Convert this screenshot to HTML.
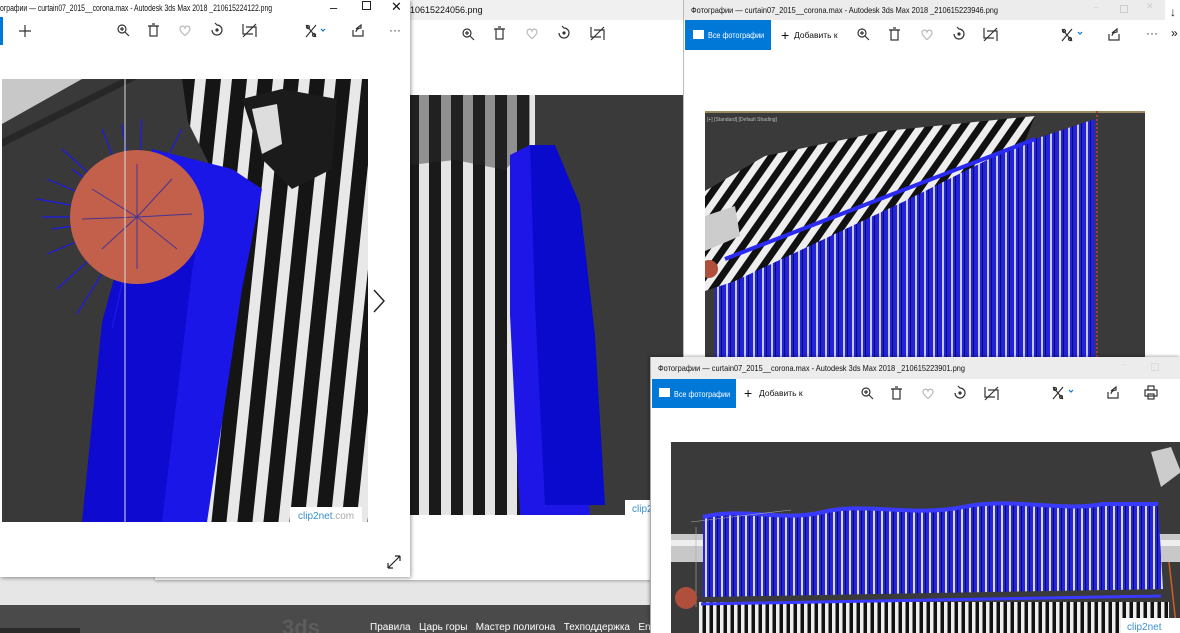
<!DOCTYPE html>
<html><head><meta charset="utf-8">
<style>
*{margin:0;padding:0;box-sizing:border-box}
html,body{width:1180px;height:633px;overflow:hidden}
body{position:relative;background:#e6e6e6;font-family:"Liberation Sans","Noto Sans CJK SC",sans-serif;color:#111}
.abs{position:absolute}
.win{position:absolute;background:#fff;overflow:hidden}
.tb{position:absolute;left:0;right:0;top:0;background:#f0f0f0;font-size:9px;white-space:nowrap}
.tb span.t{transform-origin:0 0}
.blue{position:absolute;background:#0078d7;color:#fff;font-size:8.5px;white-space:nowrap}
.small{font-size:9px;white-space:nowrap;position:absolute}
svg{display:block}
</style></head><body>

<!-- bottom site strip -->
<div class="abs" style="left:0;top:605px;width:1180px;height:28px;background:#4a4a4a"></div>
<div class="abs" style="left:0;top:628px;width:80px;height:5px;background:#2a2a2a"></div>
<div class="abs" style="left:282px;top:615px;font-size:22px;color:#5c5c5c;font-weight:bold">3ds</div>
<div class="small" style="left:370px;top:622px;color:#fff;font-size:10px">Правила&nbsp;&nbsp; Царь горы&nbsp;&nbsp; Мастер полигона&nbsp;&nbsp; Техподдержка&nbsp;&nbsp; Eng</div>

<!-- Window 2 (middle) -->
<div class="win" style="left:155px;top:0;width:528px;height:580px;box-shadow:0 1px 3px rgba(0,0,0,.3)">
  <div class="tb" style="height:20px"><span style="position:absolute;left:255px;top:5px">10615224056.png</span></div>
  <svg class="abs" style="left:0;top:20px" width="528" height="30">
    <g fill="none" stroke="#333" stroke-width="1.2">
      <circle cx="312" cy="13" r="4"/><path d="M315 16l4 4M310 13h4M312 11v4"/>
      <rect x="341" y="9" width="7" height="10"/><path d="M339 9h11M343 7h3"/>
      <path d="M372 12c0-3 4-4 5-1c1-3 5-2 5 1c0 3-5 6-5 7c0-1-5-4-5-7z" stroke="#bbb"/>
      <path d="M404 13a5 5 0 1 0 5-5l-2-2" /><circle cx="409" cy="13" r="1" fill="#333"/>
      <path d="M436 7v10h10M439 10h10v10M436 20l13-13"/>
    </g>
  </svg>
  <svg class="abs" style="left:255px;top:95px" width="273" height="420">
    <defs><pattern id="st2" width="22" height="420" patternUnits="userSpaceOnUse"><rect width="22" height="420" fill="#1a1a1a"/><rect x="9" width="10" height="420" fill="#e4e4e4"/></pattern></defs>
    <rect width="273" height="420" fill="#3a3a3a"/>
    <rect x="0" y="0" width="125" height="420" fill="url(#st2)"/>
    <path d="M0 0h120v50l-25 25l-50-10l-45 5z" fill="#2a2a2a" opacity=".45"/>
    <path d="M100 60l20 -10l10 0l15 20l15 120l20 230l-70 0l-10-200z" fill="#1e16e6"/>
    <path d="M120 50l25 0l25 60l15 130l10 170l-60 0l-10-200z" fill="#0a0acc"/>
    <rect x="215" y="405" width="58" height="15" fill="#fff"/>
    <text x="222" y="417" font-size="10" fill="#3a8fd0" font-family="Liberation Sans">clip2net</text>
  </svg>
</div>

<!-- Window 1 (left) -->
<div class="win" style="left:0;top:0;width:410px;height:577px;box-shadow:1px 1px 4px rgba(0,0,0,.4)">
  <div class="tb" style="height:17px;background:#fff"><span class="t" style="position:absolute;left:0;top:3px;transform:scaleX(.76)">ографии — curtain07_2015__corona.max - Autodesk 3ds Max 2018 _210615224122.png</span>
    <span style="position:absolute;left:330px;top:0;font-size:13px">–</span>
    <span style="position:absolute;left:362px;top:1px;width:9px;height:9px;border:1px solid #222"></span>
    <span style="position:absolute;left:391px;top:-1px;font-size:13px">✕</span>
  </div>
  <div class="abs" style="left:0;top:17px;width:3px;height:28px;background:#0078d7"></div>
  <svg class="abs" style="left:0;top:17px" width="410" height="28">
    <g fill="none" stroke="#333" stroke-width="1.2">
      <path d="M25 8v12M19 14h12"/>
      <circle cx="122" cy="12" r="4"/><path d="M125 15l4 4M120 12h4M122 10v4"/>
      <rect x="150" y="9" width="7" height="10"/><path d="M148 9h11M152 7h3"/>
      <path d="M180 12c0-3 4-4 5-1c1-3 5-2 5 1c0 3-5 6-5 7c0-1-5-4-5-7z" stroke="#bbb"/>
      <path d="M212 13a5 5 0 1 0 5-5l-2-2"/><circle cx="217" cy="13" r="1" fill="#333"/>
      <path d="M243 7v10h10M246 10h10v10M243 20l13-13"/>
      <path d="M306 8l10 12M306 20l10-12" /><circle cx="308" cy="10" r="1.5"/><circle cx="314" cy="18" r="1.5"/>
      <path d="M321 12l2 2l2-2" stroke="#0078d7"/>
      <path d="M353 13v6h10v-6M356 12l5-4v3c-3 0-5 2-5 4"/>
    </g>
    <text x="389" y="17" font-size="12" fill="#333">···</text>
  </svg>
  <svg class="abs" style="left:2px;top:79px" width="366" height="443">
    <defs>
      <pattern id="st1" width="26" height="443" patternUnits="userSpaceOnUse" patternTransform="skewX(-6)"><rect width="26" height="443" fill="#151515"/><rect x="11" width="11" height="443" fill="#e8e8e8"/></pattern>
    </defs>
    <rect width="366" height="443" fill="#393939"/>
    <path d="M0 0h80l-80 45z" fill="#c8c8c8"/>
    <path d="M0 60l120-60h15l-135 68z" fill="#151515" opacity=".5"/>
    <path d="M180 0h186v443h-200l20-150l30-190l-30-60z" fill="url(#st1)"/>
    <path d="M240 20l40-10l55 10l-5 70l-40 20l-30-30z" fill="#1b1b1b"/>
    <path d="M250 30l25 -5l5 40l-20 10z" fill="#ddd"/>
    <path d="M150 70l40 10l40 10l30 20l-20 100l-35 233h-100l20-200l10-80z" fill="#1a16e8"/>
    <path d="M80 443l20-200l25-90l35-30l40 10l-10 60l-30 250z" fill="#0e0ad0"/>
    <g stroke="#1e1ae8" stroke-width="1.2">
      <path d="M135 138L40 138M135 138L45 100M135 138L60 70M135 138L100 50M135 138L140 40M135 138L180 50M135 138L45 175M135 138L55 210M135 138L75 235M135 138L110 250M135 138L50 150M135 138L35 120M135 138L70 90M135 138L120 45"/>
    </g>
    <circle cx="135" cy="138" r="67" fill="#c2604c"/>
    <g stroke="#2a2aa0" stroke-width="1" opacity=".8">
      <path d="M135 138L90 110M135 138L170 100M135 138L100 170M135 138L175 170M135 138L135 85M135 138L135 190M135 138L80 140M135 138L190 135"/>
    </g>
    <path d="M123 0v443" stroke="#ddd" stroke-width="1"/>
    <rect x="288" y="428" width="72" height="15" fill="#fff"/>
    <text x="296" y="440" font-size="10" fill="#3a8fd0" font-family="Liberation Sans">clip2net<tspan fill="#aaa">.com</tspan></text>
  </svg>
  <svg class="abs" style="left:370px;top:288px" width="20" height="26"><path d="M4 2l10 11l-10 11" fill="none" stroke="#222" stroke-width="1.4"/></svg>
  <svg class="abs" style="left:386px;top:554px" width="16" height="16"><path d="M2 14l12-12M2 14v-5M2 14h5M14 2h-5M14 2v5" fill="none" stroke="#222" stroke-width="1.2"/></svg>
</div>

<!-- right edge browser strip -->
<div class="abs" style="left:1164px;top:0;width:16px;height:360px;background:#fff;border-left:1px solid #ccc"></div>
<div class="small" style="left:1170px;top:5px;font-size:12px">↓</div>
<div class="small" style="left:1171px;top:26px;font-size:12px">»</div>

<!-- Window 3 (right top) -->
<div class="win" style="left:683px;top:0;width:482px;height:358px;border-left:1px solid #bbb">
  <div class="tb" style="height:20px;background:#ececec"><span class="t" style="position:absolute;left:7px;top:5px;font-size:8.5px;transform:scaleX(.87)">Фотографии — curtain07_2015__corona.max - Autodesk 3ds Max 2018 _210615223946.png</span>
  <span style="position:absolute;left:410px;top:2px;color:#ccc">–</span><span style="position:absolute;left:436px;top:5px;width:8px;height:8px;border:1px solid #ccc"></span><span style="position:absolute;left:462px;top:1px;color:#ccc">✕</span></div>
  <div class="blue" style="left:1px;top:20px;width:86px;height:30px"><span style="position:absolute;left:8px;top:10px;width:11px;height:9px;background:#fff"></span><span style="position:absolute;left:23px;top:10px;transform:scaleX(.85);transform-origin:0 0">Все фотографии</span></div>
  <div class="small" style="left:97px;top:27px;font-size:14px">+</div>
  <div class="small" style="left:110px;top:30px;font-size:8.5px">Добавить к</div>
  <svg class="abs" style="left:0;top:20px" width="482" height="30">
    <g fill="none" stroke="#333" stroke-width="1.2">
      <circle cx="178" cy="13" r="4"/><path d="M181 16l4 4M176 13h4M178 11v4"/>
      <rect x="207" y="10" width="7" height="10"/><path d="M205 10h11M209 8h3"/>
      <path d="M238 13c0-3 4-4 5-1c1-3 5-2 5 1c0 3-5 6-5 7c0-1-5-4-5-7z" stroke="#bbb"/>
      <path d="M270 14a5 5 0 1 0 5-5l-2-2"/><circle cx="275" cy="14" r="1" fill="#333"/>
      <path d="M300 8v10h10M303 11h10v10M300 21l13-13"/>
      <path d="M378 9l10 12M378 21l10-12"/><circle cx="380" cy="11" r="1.5"/><circle cx="386" cy="19" r="1.5"/>
      <path d="M394 12l2 2l2-2" stroke="#0078d7"/>
      <path d="M425 14v6h10v-6M428 13l5-4v3c-3 0-5 2-5 4"/>
    </g>
    <text x="462" y="17" font-size="12" fill="#333">···</text>
  </svg>
  <svg class="abs" style="left:21px;top:111px" width="440" height="247">
    <defs>
      <pattern id="bl" width="9" height="247" patternUnits="userSpaceOnUse"><rect width="9" height="247" fill="#2323d8"/><rect x="3" width="2" height="247" fill="#c8c8f0"/><rect x="7" width="1" height="247" fill="#0a0a70"/></pattern>
      <pattern id="zb" width="14" height="14" patternUnits="userSpaceOnUse" patternTransform="rotate(35)"><rect width="14" height="14" fill="#111"/><rect width="7" height="14" fill="#eee"/></pattern>
    </defs>
    <rect width="440" height="247" fill="#3a3a3a"/>
    <rect width="440" height="2" fill="#9a8a60"/>
    <text x="2" y="10" font-size="5" fill="#bbb">[+] [Standard] [Default Shading]</text>
    <path d="M10 148l320-120l60-20v239h-380z" fill="url(#bl)"/>
    <path d="M0 80l60-35l120-25l150-15l-10 25l-120 60l-170 80l-30 10z" fill="url(#zb)"/>
    <path d="M0 105l30 -10l5 30l-35 15z" fill="#ccc"/>
    <path d="M20 148l310-120" stroke="#2a2af0" stroke-width="4"/>
    <circle cx="4" cy="158" r="9" fill="#b0503c"/>
    <path d="M392 0v247" stroke="#a04040" stroke-width="2" stroke-dasharray="2 2"/>
  </svg>
</div>

<!-- Window 4 (bottom right) -->
<div class="win" style="left:650px;top:357px;width:530px;height:276px;border-left:1px solid #aaa;box-shadow:-1px -1px 3px rgba(0,0,0,.3)">
  <div class="tb" style="height:22px;background:#ececec"><span class="t" style="position:absolute;left:7px;top:6px;font-size:8.5px;transform:scaleX(.87)">Фотографии — curtain07_2015__corona.max - Autodesk 3ds Max 2018 _210615223901.png</span>
  <span style="position:absolute;left:470px;top:2px;color:#ddd">–</span><span style="position:absolute;left:500px;top:6px;width:8px;height:8px;border:1px solid #ddd"></span></div>
  <div class="blue" style="left:1px;top:22px;width:84px;height:29px"><span style="position:absolute;left:7px;top:9px;width:11px;height:9px;background:#fff"></span><span style="position:absolute;left:22px;top:10px;transform:scaleX(.85);transform-origin:0 0">Все фотографии</span></div>
  <div class="small" style="left:93px;top:28px;font-size:14px">+</div>
  <div class="small" style="left:108px;top:31px;font-size:8.5px">Добавить к</div>
  <svg class="abs" style="left:0;top:22px" width="530" height="30">
    <g fill="none" stroke="#333" stroke-width="1.2">
      <circle cx="215" cy="13" r="4"/><path d="M218 16l4 4M213 13h4M215 11v4"/>
      <rect x="242" y="10" width="7" height="10"/><path d="M240 10h11M244 8h3"/>
      <path d="M272 13c0-3 4-4 5-1c1-3 5-2 5 1c0 3-5 6-5 7c0-1-5-4-5-7z" stroke="#bbb"/>
      <path d="M304 14a5 5 0 1 0 5-5l-2-2"/><circle cx="309" cy="14" r="1" fill="#333"/>
      <path d="M334 8v10h10M337 11h10v10M334 21l13-13"/>
      <path d="M402 8l10 12M402 20l10-12"/><circle cx="404" cy="10" r="1.5"/><circle cx="410" cy="18" r="1.5"/>
      <path d="M418 11l2 2l2-2" stroke="#0078d7"/>
      <path d="M457 13v6h10v-6M460 12l5-4v3c-3 0-5 2-5 4"/>
      <rect x="494" y="11" width="12" height="6"/><rect x="497" y="7" width="6" height="4"/><rect x="497" y="15" width="6" height="5"/>
    </g>
  </svg>
  <svg class="abs" style="left:20px;top:85px" width="510" height="191">
    <defs>
      <pattern id="bl2" width="8" height="191" patternUnits="userSpaceOnUse"><rect width="8" height="191" fill="#2424d8"/><rect x="2" width="2" height="191" fill="#d8d8f4"/><rect x="6" width="1" height="191" fill="#080860"/></pattern>
      <pattern id="zs" width="7" height="191" patternUnits="userSpaceOnUse"><rect width="7" height="191" fill="#111"/><rect width="3.5" height="191" fill="#eee"/></pattern>
    </defs>
    <rect width="510" height="191" fill="#3a3a3a"/>
    <path d="M480 10l20 -5l10 25l-20 15z" fill="#ccc"/>
    <rect x="0" y="92" width="510" height="28" fill="#c8c8c8"/>
    <rect x="0" y="98" width="510" height="6" fill="#eee"/>
    <path d="M28 160h470v31h-470z" fill="url(#zs)"/>
    <path d="M32 75c40-10 80 5 120-5s90 5 140-5s100 5 140-3l55 0l5 85l-460 8z" fill="url(#bl2)"/>
    <path d="M32 75c40-10 80 5 120-5s90 5 140-5s100 5 140-3l55 0" stroke="#3a3aff" stroke-width="4" fill="none"/>
    <path d="M30 162l460-8" stroke="#3a3aff" stroke-width="3"/>
    <path d="M20 80l100-12M25 85l0 80" stroke="#aaa" stroke-width=".6"/>
    <path d="M498 120l8 71" stroke="#d06020" stroke-width="1.5"/>
    <circle cx="15" cy="156" r="11" fill="#b0503c"/>
    <rect x="450" y="176" width="60" height="15" fill="#fff"/>
    <text x="456" y="188" font-size="10" fill="#3a8fd0" font-family="Liberation Sans">clip2net</text>
  </svg>
</div>

</body></html>
